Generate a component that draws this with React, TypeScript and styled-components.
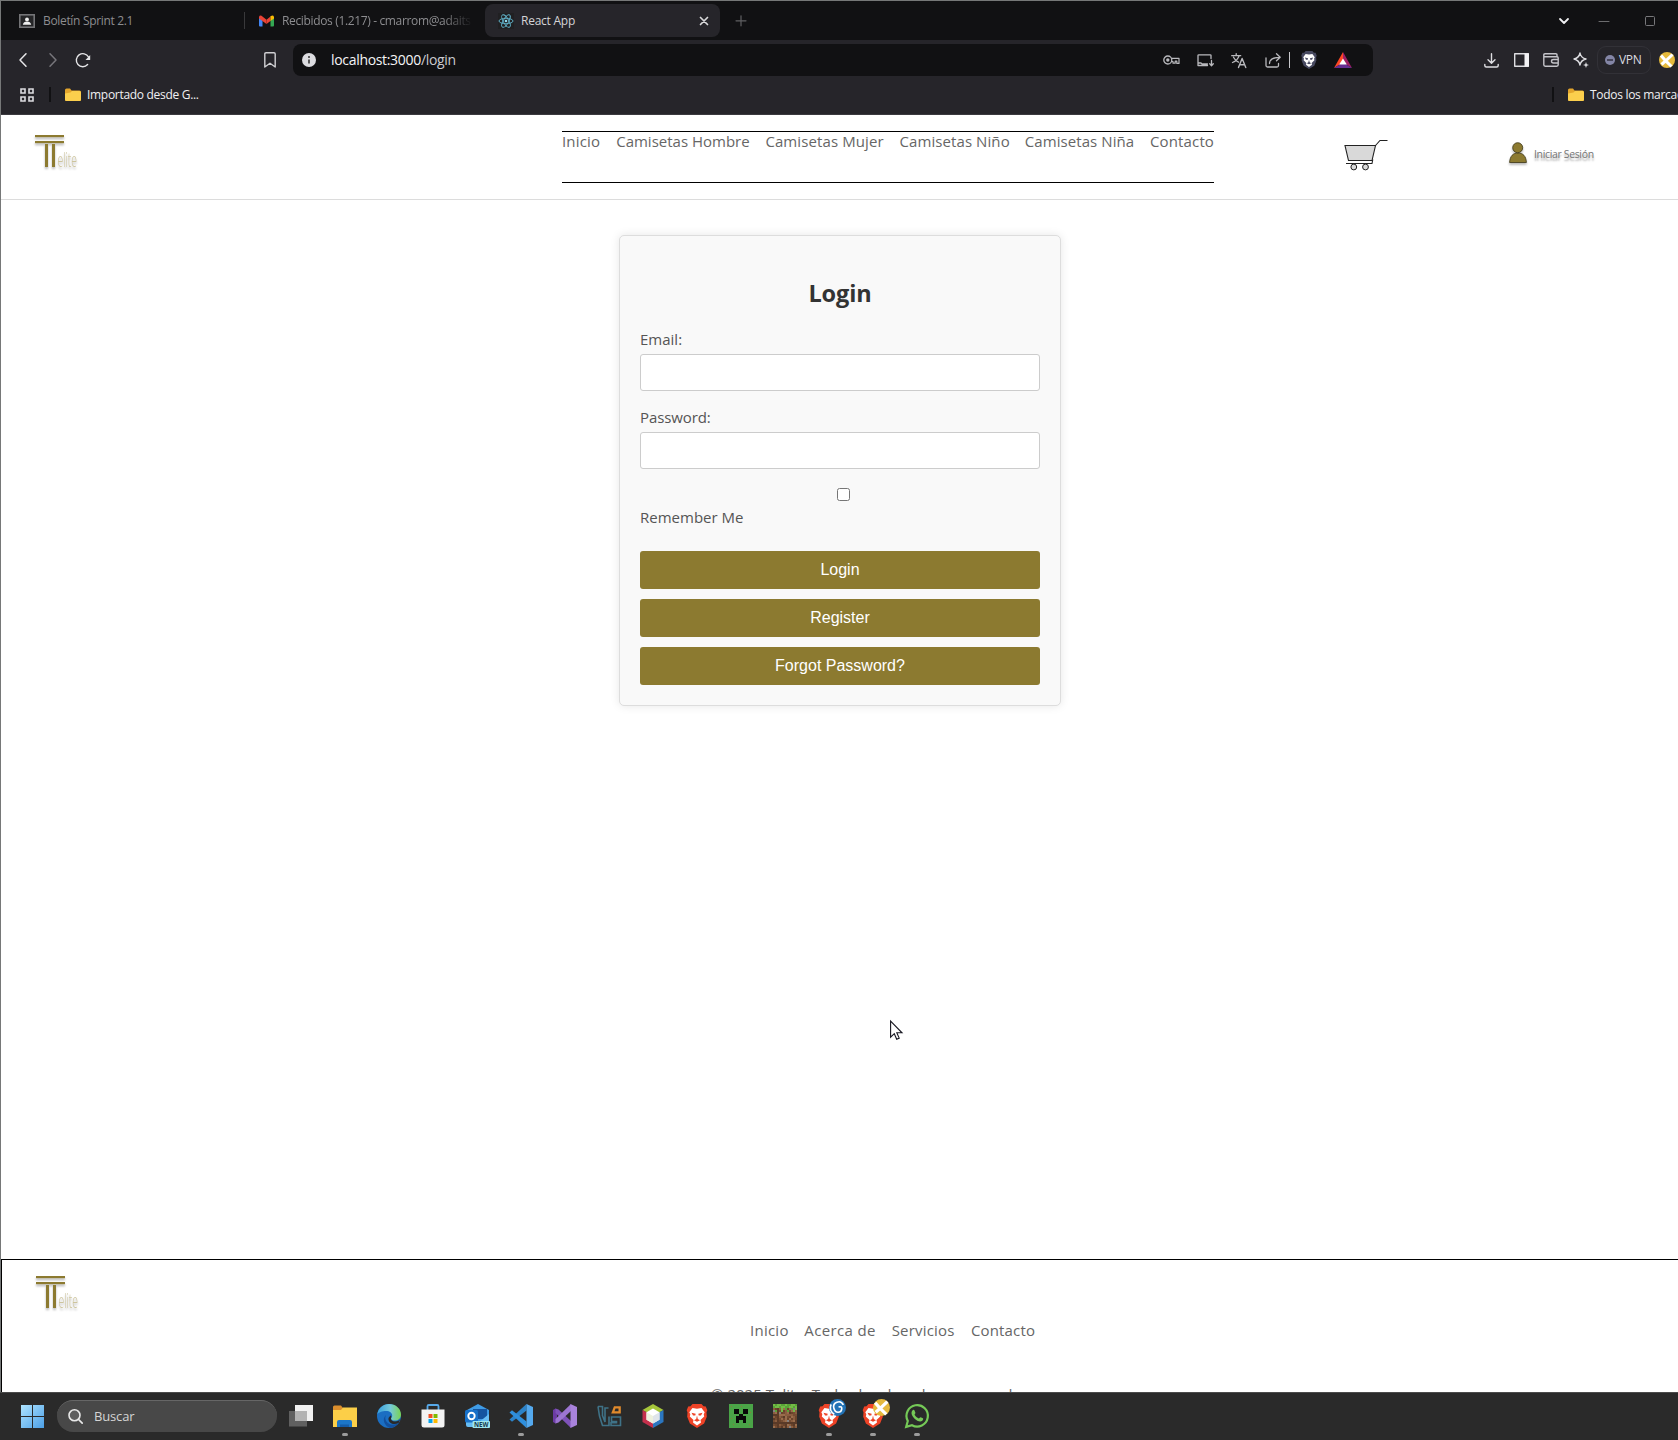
import React from "react";
import styled, { createGlobalStyle, css } from "styled-components";

const UI = `"Open Sans", "Noto Sans", sans-serif`;
const GOLD = "#8c7a30";

const GlobalStyle = createGlobalStyle`
  *, *::before, *::after { box-sizing: border-box; }
  html, body { margin: 0; padding: 0; overflow: hidden; }
  body { font-family: ${UI}; background: #fff; }
  svg { display: block; flex: none; overflow: visible; }
`;

const Desktop = styled.div`
  position: relative;
  width: 1678px;
  height: 1440px;
  overflow: hidden;
  display: flex;
  flex-direction: column;
`;

const BrowserWindow = styled.div`
  height: 1392px;
  display: flex;
  flex-direction: column;
  border-top: 1px solid #767878;
  border-left: 1px solid #767878;
  overflow: hidden;
  background: #fff;
`;

const Label = styled.span<{ size: number; track?: number; tone?: string; weight?: number }>`
  font-size: ${(p) => p.size}px;
  letter-spacing: ${(p) => p.track ?? 0}px;
  color: ${(p) => p.tone ?? "#e8e8ea"};
  font-weight: ${(p) => p.weight ?? 400};
  white-space: nowrap;
  line-height: 1.3;
`;

const Slot = styled.span<{ w: number }>`
  width: ${(p) => p.w}px;
  height: 100%;
  flex: none;
  display: flex;
  align-items: center;
  justify-content: center;
`;

const Gap = styled.span<{ w: number }>`
  flex: none;
  width: ${(p) => p.w}px;
`;

const Divider = styled.span<{ tone: string; h: number; w?: number }>`
  flex: none;
  width: ${(p) => p.w ?? 1}px;
  height: ${(p) => p.h}px;
  background: ${(p) => p.tone};
`;

/* Tab strip */
const TabStrip = styled.div`
  flex: none;
  height: 39px;
  background: #111113;
  display: flex;
  align-items: center;
`;

const Tab = styled.div<{ w: number; active?: boolean }>`
  flex: none;
  width: ${(p) => p.w}px;
  height: 33px;
  display: flex;
  align-items: center;
  padding: 0 9px 0 13px;
  gap: 8px;
  overflow: hidden;
  ${(p) =>
    p.active &&
    css`
      background: #26252a;
      border-radius: 8px;
      gap: 7px;
    `}
`;

const TabTitle = styled(Label)<{ fade?: boolean }>`
  flex: 1;
  overflow: hidden;
  ${(p) =>
    p.fade &&
    css`
      mask-image: linear-gradient(to right, #000 84%, transparent 100%);
    `}
`;

/* Navigation toolbar */
const Toolbar = styled.div`
  flex: none;
  height: 40px;
  background: #26252a;
  display: flex;
  align-items: center;
  padding-left: 7px;
`;

const AddressBar = styled.div`
  flex: none;
  width: 1080px;
  height: 32px;
  border-radius: 8px;
  background: #111113;
  display: flex;
  align-items: center;
`;

const Url = styled.div`
  flex: 1;
  padding-left: 6px;
  display: flex;
  align-items: center;
`;

const VpnButton = styled.div`
  flex: none;
  width: 54px;
  height: 28px;
  border: 1px solid #323137;
  border-radius: 9px;
  display: flex;
  align-items: center;
  padding-left: 7px;
  gap: 4px;
`;

const BookmarksBar = styled.div`
  flex: none;
  height: 35px;
  background: #26252a;
  border-bottom: 1px solid #3b3a3f;
  display: flex;
  align-items: center;
  padding: 0 0 5px 19px;
`;

const BookmarkFolder = styled.div<{ w?: number }>`
  flex: none;
  width: ${(p) => (p.w ? `${p.w}px` : "auto")};
  display: flex;
  align-items: center;
  gap: 6px;
`;

/* Web page */
const SiteHeader = styled.header`
  flex: none;
  height: 85px;
  border-bottom: 1px solid #dcdcdc;
  display: flex;
  align-items: flex-start;
`;

const LogoBox = styled.div<{ w: number; top: number }>`
  flex: none;
  width: ${(p) => p.w}px;
  padding: ${(p) => p.top}px 0 0 34px;
`;

const MainNav = styled.nav`
  flex: none;
  width: 652px;
  height: 52px;
  margin-top: 16px;
  border-top: 1px solid #000;
  border-bottom: 1px solid #000;
  display: flex;
  justify-content: space-between;
`;

const NavLink = styled.a<{ w: number; track?: number }>`
  width: ${(p) => p.w}px;
  font-size: 15px;
  letter-spacing: ${(p) => p.track ?? 0}px;
  line-height: 18px;
  color: #666;
  white-space: nowrap;
`;

const CartLink = styled.a`
  flex: none;
  padding: 25px 0 0 130px;
  width: 295px;
`;

const SessionLink = styled.a`
  display: flex;
  align-items: flex-start;
  gap: 7px;
  padding-top: 27px;
`;

const SessionText = styled(Label)`
  text-shadow: 0 3px 2px rgba(0, 0, 0, 0.35);
  padding-top: 6px;
`;

const Main = styled.main`
  flex: none;
  height: 1059px;
  padding-top: 35px;
`;

const LoginCard = styled.form`
  width: 442px;
  height: 471px;
  margin-left: 618px;
  padding: 20px;
  border: 1px solid #ddd;
  border-radius: 5px;
  background: #f9f9f9;
  box-shadow: 0 0 10px rgba(0, 0, 0, 0.1);
  display: flex;
  flex-direction: column;
`;

const Title = styled.h2`
  margin: 20px 0 19px;
  height: 34px;
  line-height: 34px;
  font-size: 23.5px;
  font-weight: 700;
  letter-spacing: -0.1px;
  text-align: center;
  color: #333;
`;

const Field = styled.div`
  display: flex;
  flex-direction: column;
  gap: 5px;
  margin-bottom: 16px;
`;

const FieldLabel = styled.label<{ track?: number }>`
  height: 20px;
  line-height: 20px;
  font-size: 15px;
  letter-spacing: ${(p) => p.track ?? 0}px;
  color: #555;
`;

const TextInput = styled.input`
  width: 100%;
  height: 37px;
  padding: 8px;
  border: 1px solid #ccc;
  border-radius: 3px;
  background: #fff;
`;

const Checkbox = styled.span`
  flex: none;
  width: 13px;
  height: 13px;
  margin: 3px 0 6px 197px;
  border: 1px solid #767676;
  border-radius: 2.5px;
  background: #fff;
`;

const Buttons = styled.div`
  margin-top: 24px;
  display: flex;
  flex-direction: column;
  gap: 10px;
`;

const GoldButton = styled.button`
  height: 38px;
  padding: 0;
  border: none;
  border-radius: 3px;
  background: ${GOLD};
  color: #fff;
  font: 16px "Liberation Sans", Arial, sans-serif;
`;

const SiteFooter = styled.footer`
  flex: none;
  height: 200px;
  border-top: 1px solid #000;
  border-left: 1px solid #000;
  display: flex;
  flex-direction: column;
  background: #fff;
`;

const FooterNav = styled.nav`
  margin: 7px 0 0 748px;
  width: 285px;
  display: flex;
  justify-content: space-between;
`;

const Copyright = styled.p`
  margin: 45px 0 0 709px;
  font-size: 15px;
  line-height: 20px;
  letter-spacing: 0.02px;
  color: #666;
  white-space: nowrap;
`;

/* Taskbar */
const Taskbar = styled.div`
  flex: none;
  height: 48px;
  background: #2a2a2a;
  border-top: 1px solid #4b4b4b;
  display: flex;
  align-items: center;
  padding: 0 0 1px 21px;
`;

const SearchPill = styled.div`
  flex: none;
  width: 220px;
  height: 32px;
  margin: 0 2px 0 13px;
  border-radius: 16px;
  background: #484848;
  border-top: 1px solid #666;
  display: flex;
  align-items: center;
  padding-left: 11px;
  gap: 11px;
`;

const TaskSlot = styled.div`
  position: relative;
  flex: none;
  width: 44px;
  height: 46px;
  display: flex;
  align-items: center;
  justify-content: center;
`;

const RunningMark = styled.span`
  position: absolute;
  bottom: 3px;
  left: 19px;
  width: 6px;
  height: 3px;
  border-radius: 2px;
  background: #9b9b9b;
`;

const Pointer = styled.svg`
  position: absolute;
  left: 890px;
  top: 1020px;
`;

/* Drawings */
const line = (color: string, width = 1.4) => ({
  fill: "none",
  stroke: color,
  strokeWidth: width,
  strokeLinecap: "round" as const,
  strokeLinejoin: "round" as const,
});

const LogoSvg = styled.svg`
  filter: drop-shadow(0 2px 1px rgba(0, 0, 0, 0.28));
`;

const FolderIcon = () => (
  <svg width="16" height="14" viewBox="0 0 16 14">
    <path d="M0 2a1.500 1.500 0 0 1 1.500-1.500H5l1.500 2H14.500A1.500 1.500 0 0 1 16 4v7.500a1.500 1.500 0 0 1-1.500 1.500h-13A1.500 1.500 0 0 1 0 11.500z" fill="#e3a52c" />
    <path d="M0 5.500 5.500 4.500 7 3h7.500A1.500 1.500 0 0 1 16 4.500v7a1.500 1.500 0 0 1-1.500 1.500h-13A1.500 1.500 0 0 1 0 11.500z" fill="#fbcf4d" />
  </svg>
);

const TeliteLogo = () => (
  <LogoSvg width="46" height="38" viewBox="0 0 46 38">
    <g fill={GOLD}>
      <rect x="0" y="0" width="29" height="2.200" />
      <rect x="0" y="6" width="29" height="2.200" />
      <rect x="10" y="9" width="3" height="23" />
      <rect x="17" y="9" width="3" height="23" />
    </g>
    <text x="22.500" y="32" fontSize="19.500" textLength="19.500" lengthAdjust="spacingAndGlyphs" fill="#cdc49c" fontFamily="Open Sans, sans-serif" fontWeight="300">
      elite
    </text>
  </LogoSvg>
);

const CartIcon = () => (
  <svg width="44" height="31" viewBox="0 0 44 31">
    <path d="M1 5.500h30.500L28 20.500H4.500z" fill="#d9d9d9" stroke="#222" strokeWidth="1.100" />
    <path d="M2 23.500h26l.8-4M31.500 5.500l4.500-5h7.500" fill="none" stroke="#222" strokeWidth="1.100" />
    <circle cx="9.800" cy="27" r="2.900" fill="#d9d9d9" stroke="#222" strokeWidth="1" />
    <circle cx="21.500" cy="27" r="2.900" fill="#d9d9d9" stroke="#222" strokeWidth="1" />
  </svg>
);

const UserIcon = () => (
  <LogoSvg width="18" height="22" viewBox="0 0 18 22">
    <g fill={GOLD} stroke="#3c3617" strokeWidth=".8">
      <path d="M.6 20.500C1 14 4 11 9 11s8 3 8.400 9.500z" />
      <circle cx="8.700" cy="5.700" r="5" />
    </g>
  </LogoSvg>
);

const ReactIcon = () => (
  <svg width="16" height="16" viewBox="0 0 16 16">
    <rect width="16" height="16" fill="#202022" />
    <g fill="none" stroke="#62b4cc" strokeWidth=".9">
      <ellipse cx="8" cy="8" rx="7" ry="2.700" />
      <ellipse cx="8" cy="8" rx="7" ry="2.700" transform="rotate(60 8 8)" />
      <ellipse cx="8" cy="8" rx="7" ry="2.700" transform="rotate(120 8 8)" />
    </g>
    <circle cx="8" cy="8" r="1.300" fill="#8fd8ee" />
  </svg>
);

const GmailIcon = () => (
  <svg width="15" height="12" viewBox="0 0 15 12">
    <path d="M0 2.500V10.500Q0 11.500 1 11.500H3.500V5z" fill="#4285f4" />
    <path d="M15 2.500V10.500Q15 11.500 14 11.500H11.500V5z" fill="#34a853" />
    <path d="M0 2Q.5 0 2.500.7L7.500 4.700V9L0 3.400z" fill="#ea4335" />
    <path d="M11.500 1.500 7.500 4.700V9l4-3z" fill="#ea4335" />
    <path d="M15 3.400V2Q14.300-.2 12 1l-.5.500V6z" fill="#fbbc04" />
  </svg>
);

const ClassroomIcon = () => (
  <svg width="16" height="14" viewBox="0 0 16 14">
    <rect x=".8" y=".8" width="14.400" height="12.400" fill="#252527" stroke="#747477" strokeWidth="1.600" />
    <circle cx="8" cy="5.500" r="1.900" fill="#eee" />
    <path d="M3.800 10.800c.5-2.500 2-3 4.200-3s3.700.5 4.200 3z" fill="#eee" />
  </svg>
);

const BraveLion = ({ size, shield }: { size: number; shield: string }) => (
  <svg width={size} height={size} viewBox="0 0 24 24">
    <path d="M7.500 0h9l2 2.200 2.300.2 1.500 3.800-.8 2 .3 4.500-2.700 6.800L12 24l-7.100-4.500-2.700-6.800.3-4.500-.8-2L3.200 2.400l2.300-.2z" fill={shield} />
    <path d="M7.500 4 12 4.800l4.500-.8 3.200 4.300-1 1.900.5 2.200-3.700 3.500.5 2.500-4 3-4-3 .5-2.500-3.700-3.500.5-2.200-1-1.900z" fill="#fff" />
    <path d="m6.500 8.800 4.200 1-.4 1.700H8zM17.500 8.800l-4.200 1 .4 1.700H16zM12 11.500l.8 3.500 2.200 1.200-3 1.500-3-1.500 2.200-1.200z" fill={shield} />
  </svg>
);

const BatIcon = () => (
  <svg width="18" height="16" viewBox="0 0 18 16">
    <path d="M9 0 0 16l9-5.500z" fill="#ff4724" />
    <path d="M9 0l9 16-9-5.500z" fill="#9e1f63" />
    <path d="M0 16 9 10.500 18 16z" fill="#662d91" />
    <path d="M9 6.500 12.800 12.500H5.200z" fill="#fff" />
  </svg>
);

const GoldBall = ({ size }: { size: number }) => (
  <svg width={size} height={size} viewBox="0 0 16 16">
    <circle cx="8" cy="8" r="8" fill="#e5b93c" />
    <path d="M2 3.500Q6 8.500 12.500 14.500M13.500 2.500Q9 7 2.500 12.500" stroke="#fff" strokeWidth="3" fill="none" />
  </svg>
);

const SwirlBall = ({ size }: { size: number }) => (
  <svg width={size} height={size} viewBox="0 0 16 16">
    <circle cx="8" cy="8" r="8" fill="#2373b6" />
    <path d="M13.500 5.500Q11.500 1.500 7.500 3T4.500 8.500 8.500 12.500 12 9.500 9 7.500M2 5Q-.5 10.500 5 14.500" stroke="#fff" strokeWidth="1.500" fill="none" />
  </svg>
);

const Win11 = () => (
  <svg width="23" height="23" viewBox="0 0 23 23">
    <defs>
      <linearGradient id="win" x1="0" y1="0" x2="1" y2="1">
        <stop offset="0" stopColor="#aee4ff" />
        <stop offset="1" stopColor="#4c9fe6" />
      </linearGradient>
    </defs>
    <path d="M0 0h11v11H0zM12 0h11v11H12zM0 12h11v11H0zM12 12h11v11H12z" fill="url(#win)" />
  </svg>
);

const TaskView = () => (
  <svg width="24" height="24" viewBox="0 0 24 24">
    <rect x="6" y="1" width="18" height="16" fill="#f1f1f1" />
    <rect x="0" y="7" width="18" height="15.500" fill="#606060" />
    <rect x="6" y="7" width="12" height="10" fill="#b3b3b3" />
  </svg>
);

const Explorer = () => (
  <svg width="24" height="24" viewBox="0 0 24 24">
    <path d="M0 3q0-1.500 1.500-1.500H8L10 4v3H0z" fill="#dc8f2d" />
    <path d="M0 6h8l2-2.500h14V23H0z" fill="#fccf48" />
    <path d="M4 23v-5q0-2 2-2h11q2 0 2 2v5z" fill="#1c76c8" />
    <path d="M7 23v-2.500h9V23z" fill="#155ca8" />
  </svg>
);

const Edge = () => (
  <svg width="24" height="24" viewBox="0 0 24 24">
    <defs>
      <linearGradient id="edgeTop" x1="0" x2="1">
        <stop offset="0" stopColor="#379fdd" />
        <stop offset=".55" stopColor="#76c9d9" />
        <stop offset="1" stopColor="#79d450" />
      </linearGradient>
    </defs>
    <circle cx="12" cy="12" r="12" fill="#1b6ec2" />
    <path d="M.3 10.500C1 4.200 6 0 12 0c7 0 12 5 12 10.500 0 4-3 6-6 6-2.500 0-4-.8-4-1.800s1.200-1.200 1.200-3.200c0-2.600-2.500-4.500-6-4.500C5 7 1.500 8.500.3 10.500z" fill="url(#edgeTop)" />
    <path d="M9 11c-2.500 5 2 10.500 8 9.500 2-.3 3.500-1 5-2-2 3-5 5.200-9 5.500C7.500 22 4.500 15 9 11z" fill="#12509e" />
    <path d="M14 14.700c0 1.500 1.500 2.700 4 2.700 2 0 4-.8 5-2l-1.200 3.300Q18 21 14.500 19.500 11 17.500 11.500 14l2-2.500q1.200 0 .5 3.200z" fill="#2a2a2a" />
  </svg>
);

const Store = () => (
  <svg width="24" height="24" viewBox="0 0 24 24">
    <path d="M6.500 7V2.200Q6.500 1 7.800 1h8.400q1.300 0 1.300 1.200V7" fill="none" stroke="#56a8e8" strokeWidth="1.800" />
    <path d="M.5 5.500h23V21q0 2.500-2.500 2.500H3Q.5 23.500.5 21z" fill="#f3f3f3" />
    <path d="M7.500 10h4v4h-4z" fill="#f25022" />
    <path d="M12.500 10h4v4h-4z" fill="#7fba00" />
    <path d="M7.500 15h4v4h-4z" fill="#00a4ef" />
    <path d="M12.500 15h4v4h-4z" fill="#ffb900" />
  </svg>
);

const Outlook = () => (
  <svg width="25" height="24" viewBox="0 0 25 24">
    <path d="M2 6 13 0l11 6v16H2z" fill="#3f9be5" />
    <path d="M8 5h14v10H8z" fill="#15549f" />
    <path d="m1 14 12 5 11-9v13H3q-2 0-2-2z" fill="#67bdf4" />
    <rect x="0" y="6" width="13" height="12.500" rx="1.500" fill="#1871c9" />
    <circle cx="6.500" cy="12" r="3.200" fill="none" stroke="#fff" strokeWidth="1.900" />
    <rect x="7.500" y="17" width="17.500" height="7" rx="1" fill="#9ee5ee" />
    <text x="9" y="23" fontSize="6.500" fontWeight="700" textLength="14.500" lengthAdjust="spacingAndGlyphs" fill="#173b50" fontFamily="Open Sans, sans-serif">NEW</text>
  </svg>
);

const VSCode = () => (
  <svg width="24" height="24" viewBox="0 0 24 24">
    <path d="M17.500 0v6.500L3 17.800.5 15.500z" fill="#2c83c9" />
    <path d="M17.500 24v-6.500L3 6.300.5 8.600z" fill="#2f8fdc" />
    <path d="M17.500 0 24 3v18l-6.500 3z" fill="#54a9ee" />
  </svg>
);

const VisualStudio = () => (
  <svg width="24" height="24" viewBox="0 0 24 24">
    <path d="M0 6 2.500 4.500 4 5.500v13L2.500 19.500 0 18z" fill="#6b3ba3" />
    <path d="M2.500 4.500 5.500 5.500 18 17v7L2.500 9z" fill="#7e52b8" />
    <path d="M2.500 19.500 5.500 18.500 18 7V0L2.500 15z" fill="#9c75d2" />
    <path d="M17.500 0 24 3v18l-6.500 3z" fill="#a983dc" />
  </svg>
);

const DatabaseTool = () => (
  <svg width="25" height="22" viewBox="0 0 25 22">
    <path d="M1 1.500h4.500v9l2.500 6.500V3h3.500M1 1.500 2.500 11l3 9.500H12V11.500" fill="none" stroke="#3f7287" strokeWidth="1.600" />
    <path d="M23.500 12H14.500v4.500h5v1.200H14v2.800h9.500z" fill="none" stroke="#3f7287" strokeWidth="1.600" />
    <path d="M17 1.200h6.800V8.500H14.200z" fill="#e18a2c" />
    <path d="M18.500 3.500h3v2.800h-4z" fill="#2a2a2a" />
  </svg>
);

const NetBeans = () => (
  <svg width="22" height="24" viewBox="0 0 22 24">
    <path d="M11 0 21.500 6 11 12 .5 6z" fill="#a6c63b" />
    <path d="M.5 6 11 12v12L.5 18z" fill="#c4304c" />
    <path d="M21.500 6 11 12v12l10.500-6z" fill="#2b76c0" />
    <path d="m11 4.500 6.500 3.700v7.500L11 19.500l-6.500-3.800V8.200z" fill="#fff" />
    <path d="m11 12 6.500-3.800v7.500L11 19.500z" fill="#dfe4ea" />
    <path d="m4.500 8.200 6.500 3.800v7.500l-6.500-3.800z" fill="#eef1dd" />
  </svg>
);

const Creeper = () => (
  <svg width="24" height="24" viewBox="0 0 24 24" shapeRendering="crispEdges">
    <rect width="24" height="24" fill="#4aa447" />
    <path d="M5 5h5v5H5zM14 5h5v5h-5zM10 10h4v2h3v7h-3v-3h-4v3H7v-7h3z" fill="#080808" />
    <path d="M2 2h1v1H2zM12 2h1v1h-1zM21 8h1v1h-1zM2 14h1v1H2zM20 20h1v1h-1zM4 20h1v1H4z" fill="#8a7a3b" />
  </svg>
);

const DIRT = ["#8a5d3f", "#6b442b", "#9a6d4c", "#754c32", "#5a3a27", "#848080"];
const GrassBlock = () => (
  <svg width="24" height="24" viewBox="0 0 12 12" shapeRendering="crispEdges">
    {Array.from({ length: 144 }, (_, i) => {
      const x = i % 12;
      const y = Math.floor(i / 12);
      const n = (x * 7 + y * 11 + x * y * 3) % 17;
      const grass = y < 2 || (y < 4 && n % 3 === 0);
      return <rect key={i} x={x} y={y} width="1" height="1" fill={grass ? (n % 2 ? "#58a236" : "#72bb46") : DIRT[n === 16 ? 5 : n % 5]} />;
    })}
  </svg>
);

const WhatsApp = () => (
  <svg width="24" height="24" viewBox="0 0 24 24">
    <path d="M1.200 22.800 2.800 17A10.700 10.700 0 1 1 7 21.200z" fill="#2a2a2a" stroke="#75c957" strokeWidth="2.200" />
    <path d="M7.200 6.800c1-1.400 2-1 2.300-.2l.9 2.200c.2.700-.9 1.400-.8 1.900 1 1.900 2.400 3 4.200 3.700.6.100 1.300-1.500 1.900-1.200l2.200 1.100c.7.400.2 2-.9 2.700-2.100 1.300-5.200-.2-7.400-2.200C7.300 12.400 5.500 9.300 7.200 6.800z" fill="#75c957" />
  </svg>
);

const BadgeWrap = styled.span`
  position: relative;
  display: block;
`;
const Badge = styled.span`
  position: absolute;
  left: 12px;
  top: -5px;
`;

const BadgedBrave = ({ children }: { children: React.ReactNode }) => (
  <BadgeWrap>
    <BraveLion size={24} shield="#ee4327" />
    <Badge>{children}</Badge>
  </BadgeWrap>
);

const tasks: { icon: React.ReactNode; running?: boolean }[] = [
  { icon: <TaskView /> },
  { icon: <Explorer />, running: true },
  { icon: <Edge /> },
  { icon: <Store /> },
  { icon: <Outlook /> },
  { icon: <VSCode />, running: true },
  { icon: <VisualStudio /> },
  { icon: <DatabaseTool /> },
  { icon: <NetBeans /> },
  { icon: <BraveLion size={24} shield="#ee4327" /> },
  { icon: <Creeper /> },
  { icon: <GrassBlock /> },
  { icon: <BadgedBrave><SwirlBall size={17} /></BadgedBrave>, running: true },
  { icon: <BadgedBrave><GoldBall size={17} /></BadgedBrave>, running: true },
  { icon: <WhatsApp />, running: true },
];

const navItems = [
  { text: "Inicio", w: 38, track: 0.15 },
  { text: "Camisetas Hombre", w: 133, track: 0 },
  { text: "Camisetas Mujer", w: 118, track: 0.1 },
  { text: "Camisetas Niño", w: 109, track: 0.08 },
  { text: "Camisetas Niña", w: 109, track: 0.08 },
  { text: "Contacto", w: 64, track: 0.15 },
];

const footerItems = [
  { text: "Inicio", w: 38, track: 0.25 },
  { text: "Acerca de", w: 71, track: 0.35 },
  { text: "Servicios", w: 63, track: 0.2 },
  { text: "Contacto", w: 64, track: 0.15 },
];

export default function App() {
  return (
    <Desktop>
      <GlobalStyle />
      <BrowserWindow>
        <TabStrip>
          <Gap w={5} />
          <Tab w={237}>
            <ClassroomIcon />
            <TabTitle size={12} tone="#8d8d90" track={-0.330}>Boletín Sprint 2.1</TabTitle>
          </Tab>
          <Gap w={1} />
          <Divider tone="#39393b" h={17} />
          <Gap w={1} />
          <Tab w={236}>
            <GmailIcon />
            <TabTitle size={12} tone="#8d8d90" track={-0.350} fade>Recibidos (1.217) - cmarrom@adaits</TabTitle>
          </Tab>
          <Gap w={3} />
          <Tab w={235} active>
            <ReactIcon />
            <TabTitle size={12} tone="#d4d4d6" track={-0.250}>React App</TabTitle>
            <svg width="14" height="14" viewBox="0 0 14 14"><path d="m3.500 3.500 7 7m0-7-7 7" {...line("#d8d8da", 1.700)} /></svg>
          </Tab>
          <Slot w={42}>
            <svg width="12" height="12" viewBox="0 0 12 12"><path d="M6 .8v10M1 5.800h10" {...line("#606063", 1.200)} /></svg>
          </Slot>
          <Gap w={782} />
          <Slot w={40}>
            <svg width="12" height="12" viewBox="0 0 12 12"><path d="m2 4 4 4 4-4" {...line("#f0f0f2", 1.800)} /></svg>
          </Slot>
          <Slot w={40}>
            <svg width="10" height="10" viewBox="0 0 10 10"><path d="M0 5.500h10" {...line("#6c6c6e", 1)} /></svg>
          </Slot>
          <Slot w={52}>
            <svg width="10" height="10" viewBox="0 0 10 10"><rect x=".5" y=".5" width="9" height="9" rx="1" {...line("#77777a", 1)} /></svg>
          </Slot>
        </TabStrip>

        <Toolbar>
          <Slot w={30}>
            <svg width="8" height="14" viewBox="0 0 8 14"><path d="M7 .8 1 7l6 6.200" {...line("#e6e6e8", 1.500)} /></svg>
          </Slot>
          <Slot w={30}>
            <svg width="8" height="14" viewBox="0 0 8 14"><path d="m1 .8 6 6.200-6 6.200" {...line("#77767b", 1.500)} /></svg>
          </Slot>
          <Slot w={30}>
            <svg width="16" height="16" viewBox="0 0 16 16">
              <path d="M13.500 5A6.500 6.500 0 1 0 12.600 12.600" {...line("#e6e6e8", 1.400)} />
              <path d="M15.200 3v4.500q0 .5-.5.500H10.500z" fill="#e6e6e8" />
            </svg>
          </Slot>
          <Gap w={157} />
          <Slot w={30}>
            <svg width="12" height="16" viewBox="0 0 12 16"><path d="M.8 15V2Q.8.8 2 .8h8Q11.200.8 11.200 2v13L6 11.200z" {...line("#cfcfd2", 1.400)} /></svg>
          </Slot>
          <Gap w={8} />
          <AddressBar>
            <Slot w={32}>
              <svg width="14" height="14" viewBox="0 0 14 14">
                <circle cx="7" cy="7" r="7" fill="#dcdce0" />
                <path d="M7 6.500v4" stroke="#333" strokeWidth="1.600" />
                <circle cx="7" cy="4" r="1" fill="#333" />
              </svg>
            </Slot>
            <Url>
              <Label size={14} tone="#f4f4f6" track={-0.320}>localhost:3000</Label>
              <Label size={14} tone="#cbcbd0" track={-0.320}>/login</Label>
            </Url>
            <Slot w={34}>
              <svg width="17" height="10" viewBox="0 0 17 10">
                <circle cx="4.800" cy="5" r="4" {...line("#b9b9bd", 1.300)} />
                <circle cx="4.800" cy="5" r="1.700" fill="#b9b9bd" />
                <path d="M8.800 3.400h7.200v5h-2.200V6.200h-1.600v2H10V6.500H8.800" {...line("#b9b9bd", 1.200)} />
              </svg>
            </Slot>
            <Slot w={34}>
              <svg width="17" height="13" viewBox="0 0 17 13">
                <path d="M14 4.500V1.600Q14 .8 13.200.8H1.800Q1 .8 1 1.600V11.500h9.500M1 9h3l1 1h5.500" {...line("#b9b9bd", 1.300)} />
                <path d="M14.500 6.500v5M12.700 9.800l1.800 1.900 1.800-1.900" {...line("#b9b9bd", 1.300)} />
              </svg>
            </Slot>
            <Slot w={34}>
              <svg width="16" height="15" viewBox="0 0 16 15">
                <path d="M.7 2.700h9M5.200.7v2M8 3Q6.500 7.500 1.500 9.500M2.500 4.200Q4.500 8 7.500 9.200" {...line("#b9b9bd", 1.300)} />
                <path d="m7.500 14.500 3.600-9 3.700 9M8.700 11.800h5" {...line("#b9b9bd", 1.400)} />
              </svg>
            </Slot>
            <Slot w={33}>
              <svg width="16" height="15" viewBox="0 0 16 15">
                <path d="M1 5v7.500Q1 14 2.500 14h9.500Q13.500 14 13.500 12.500V10.500M4.500 10.500Q4.500 4.500 14.500 4.300M11.500.8l3.700 3.500-3.700 3.500" {...line("#b9b9bd", 1.300)} />
              </svg>
            </Slot>
            <Divider tone="#c8c8cc" h={16} />
            <Gap w={2} />
            <Slot w={34}><BraveLion size={18} shield="#484a61" /></Slot>
            <Slot w={34}><BatIcon /></Slot>
            <Gap w={13} />
          </AddressBar>
          <Gap w={103} />
          <Slot w={30}>
            <svg width="15" height="15" viewBox="0 0 15 15"><path d="M7.500.8v9M4 6.700l3.500 3.500L11 6.700M.8 11.500v1Q.8 14 2.300 14h10.400q1.500 0 1.500-1.500v-1" {...line("#dedee2", 1.400)} /></svg>
          </Slot>
          <Slot w={30}>
            <svg width="15" height="14" viewBox="0 0 15 14"><rect x=".7" y=".7" width="13.600" height="12.600" {...line("#dedee2", 1.400)} /><path d="M10.500.5H15v13h-4.500z" fill="#f2f2f4" /></svg>
          </Slot>
          <Slot w={30}>
            <svg width="16" height="14" viewBox="0 0 16 14"><path d="M14 3.500V2Q14 .8 12.800.8H2Q.8.8.8 2v9.800Q.8 13.200 2.200 13.200h11.600q1.400 0 1.400-1.400V5Q15.200 3.700 14 3.700H.8M15 6.500h-4.500Q8.500 6.500 8.500 8.200T10.500 10H15" {...line("#c4c4c9", 1.400)} /></svg>
          </Slot>
          <Slot w={30}>
            <svg width="16" height="16" viewBox="0 0 16 16">
              <path d="M7 1q.8 4.800 6 6-5.200 1.200-6 6-.9-4.800-6-6Q6.100 5.800 7 1z" {...line("#dedee2", 1.400)} />
              <path d="m13 10 .8 2.200L16 13l-2.200.8L13 16l-.8-2.200L10 13l2.200-.8z" fill="#dedee2" />
            </svg>
          </Slot>
          <Gap w={1} />
          <VpnButton>
            <svg width="10" height="10" viewBox="0 0 10 10"><circle cx="5" cy="5" r="5" fill="#8486a6" /><path d="M2 5h6" stroke="#2b2a38" strokeWidth="1.400" /></svg>
            <Label size={12} tone="#dcdce0" track={-0.300}>VPN</Label>
          </VpnButton>
          <Gap w={1} />
          <Slot w={30}><GoldBall size={16} /></Slot>
        </Toolbar>

        <BookmarksBar>
          <svg width="14" height="14" viewBox="0 0 14 14"><path d="M1 1h4v4H1zM9 1h4v4H9zM1 9h4v4H1zM9 9h4v4H9z" fill="none" stroke="#dcdce0" strokeWidth="1.600" /></svg>
          <Gap w={15} />
          <Divider tone="#111113" h={15} w={2} />
          <Gap w={14} />
          <BookmarkFolder w={134}>
            <FolderIcon />
            <Label size={12} tone="#f0f0f2" track={-0.300}>Importado desde G...</Label>
          </BookmarkFolder>
          <Gap w={1353} />
          <Divider tone="#111113" h={15} w={2} />
          <Gap w={14} />
          <BookmarkFolder>
            <FolderIcon />
            <Label size={12} tone="#f0f0f2" track={-0.300}>Todos los marcadores</Label>
          </BookmarkFolder>
        </BookmarksBar>

        <SiteHeader>
          <LogoBox w={561} top={20}><TeliteLogo /></LogoBox>
          <MainNav>
            {navItems.map((n) => <NavLink key={n.text} w={n.w} track={n.track}>{n.text}</NavLink>)}
          </MainNav>
          <CartLink><CartIcon /></CartLink>
          <SessionLink>
            <UserIcon />
            <SessionText size={10.500} tone="#767676" track={-0.350}>Iniciar Sesión</SessionText>
          </SessionLink>
        </SiteHeader>

        <Main>
          <LoginCard>
            <Title>Login</Title>
            <Field>
              <FieldLabel>Email:</FieldLabel>
              <TextInput type="email" />
            </Field>
            <Field>
              <FieldLabel track={-0.100}>Password:</FieldLabel>
              <TextInput type="password" />
            </Field>
            <Checkbox />
            <FieldLabel>Remember Me</FieldLabel>
            <Buttons>
              <GoldButton type="button">Login</GoldButton>
              <GoldButton type="button">Register</GoldButton>
              <GoldButton type="button">Forgot Password?</GoldButton>
            </Buttons>
          </LoginCard>
        </Main>

        <SiteFooter>
          <LogoBox w={200} top={16}><TeliteLogo /></LogoBox>
          <FooterNav>
            {footerItems.map((n) => <NavLink key={n.text} w={n.w} track={n.track}>{n.text}</NavLink>)}
          </FooterNav>
          <Copyright>© 2025 Telite. Todos los derechos reservados.</Copyright>
        </SiteFooter>
      </BrowserWindow>

      <Taskbar>
        <Win11 />
        <SearchPill>
          <svg width="15" height="15" viewBox="0 0 15 15">
            <circle cx="6.500" cy="6.300" r="5.500" fill="#5d5d5d" stroke="#e8e8e8" strokeWidth="1.600" />
            <path d="m10.600 10.500 3.600 3.700" {...line("#e8e8e8", 1.700)} />
          </svg>
          <Label size={13} tone="#d5d5d5" track={-0.150}>Buscar</Label>
        </SearchPill>
        {tasks.map((t, i) => (
          <TaskSlot key={i}>
            {t.icon}
            {t.running && <RunningMark />}
          </TaskSlot>
        ))}
      </Taskbar>

      <Pointer width="13" height="21" viewBox="0 0 13 21">
        <path d="M.6 1v16.200l3.700-3.500 2.400 5.500 2.500-1.100-2.400-5.300h5.200z" fill="#fff" stroke="#15151f" strokeWidth="1.100" />
      </Pointer>
    </Desktop>
  );
}
